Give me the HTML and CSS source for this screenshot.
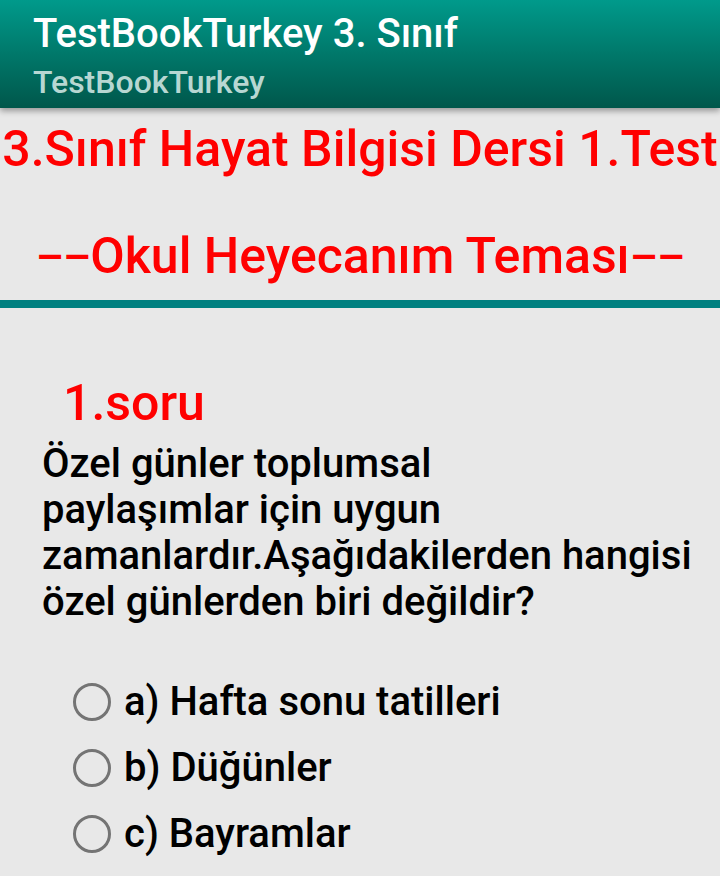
FILE: index.html
```html
<!DOCTYPE html>
<html>
<head>
<meta charset="utf-8">
<link rel="stylesheet" href="styles.css">
</head>
<body>
<header class="appbar">
  <div class="title">TestBookTurkey 3. Sınıf</div>
  <div class="subtitle">TestBookTurkey</div>
</header>
<main class="content">
  <h1 class="test-title">3.Sınıf Hayat Bilgisi Dersi 1.Test</h1>
  <h2 class="theme"><span class="dash">––</span>Okul Heyecanım Teması<span class="dash dash-end">––</span></h2>
  <div class="divider"></div>
  <section class="question">
    <div class="qnum">1.soru</div>
    <p class="qtext">Özel günler toplumsal<br>paylaşımlar için uygun<br>zamanlardır.Aşağıdakilerden hangisi<br>özel günlerden biri değildir?</p>
    <div class="options">
      <label class="option"><span class="radio"></span><span class="otext">a) Hafta sonu tatilleri</span></label>
      <label class="option"><span class="radio"></span><span class="otext">b) Düğünler</span></label>
      <label class="option"><span class="radio"></span><span class="otext">c) Bayramlar</span></label>
    </div>
  </section>
</main>
</body>
</html>
```
FILE: styles.css
```css
html, body { margin: 0; padding: 0; }
body {
  width: 720px;
  height: 876px;
  overflow: hidden;
  background: #e8e8e8;
  font-family: Roboto, "Noto Sans", sans-serif;
}
.appbar {
  height: 108px;
  background: linear-gradient(to bottom, #009a8b 0%, #00786a 50%, #00574b 100%);
  box-shadow: 0 3px 6px rgba(0,0,0,0.35);
  padding-left: 33px;
  box-sizing: border-box;
  position: relative;
  z-index: 1;
}
.title {
  color: #ffffff;
  font-size: 40px;
  font-weight: 500;
  line-height: 40px;
  padding-top: 14px;
}
.subtitle {
  color: #b7d7d2;
  font-size: 32px;
  font-weight: 500;
  line-height: 32px;
  padding-top: 12px;
}
.test-title,
.theme,
.qnum {
  margin: 0;
  color: #ff0000;
  font-weight: 500;
  font-size: 50px;
  line-height: 56px;
  white-space: nowrap;
}
.test-title {
  padding-top: 13px;
  text-align: center;
}
.theme {
  padding-top: 51px;
  text-align: center;
}
.dash {
  font-size: 44px;
  letter-spacing: -1px;
}
.dash-end { letter-spacing: -1px; }
.divider {
  height: 8px;
  background: #008080;
  margin-top: 14px;
}
.question { padding-left: 42px; }
.qnum {
  padding-top: 67px;
  padding-left: 21px;
}
.qtext {
  margin: 0;
  padding-top: 10px;
  font-size: 40px;
  line-height: 46px;
  font-weight: 500;
  color: #000;
}
.options {
  display: flex;
  flex-direction: column;
  padding-top: 44px;
  padding-left: 31px;
}
.option {
  display: flex;
  align-items: center;
  height: 66px;
  gap: 13px;
}
.radio {
  width: 38px;
  height: 38px;
  box-sizing: border-box;
  border: 3.5px solid #747474;
  border-radius: 50%;
  flex: none;
}
.otext {
  font-size: 40px;
  line-height: 66px;
  font-weight: 500;
  color: #000;
}
```
